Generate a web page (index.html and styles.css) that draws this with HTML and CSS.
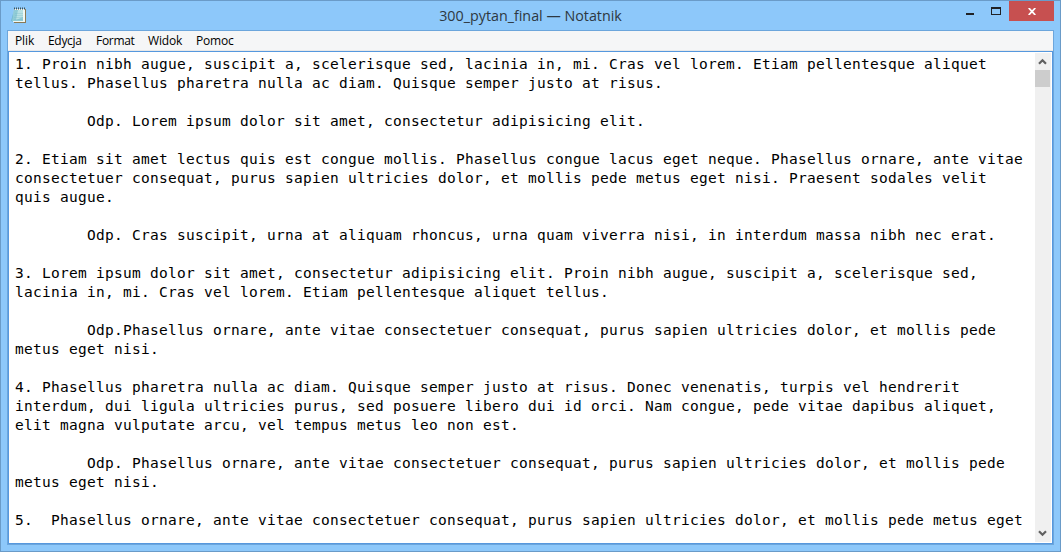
FILE: index.html
```html
<!DOCTYPE html>
<html lang="pl">
<head>
<meta charset="utf-8">
<title>300_pytan_final — Notatnik</title>
<link rel="stylesheet" href="styles.css">
</head>
<body>
<div class="window">
  <header class="titlebar">
    <svg class="app-icon" width="17" height="18" viewBox="0 0 17 18">
      <path d="M3 3L0 14l3 1z" fill="#70b6ce"/>
      <path d="M3 2h12v14H3z" fill="#8a7a55"/>
      <path d="M3 2h11v13H2z" fill="#f0f8f5"/>
      <path d="M3 3h9v11H1z" fill="#8fcbd6"/>
      <path d="M7 3h5v7L5 13z" fill="#b8e1e4"/>
      <path d="M4 6.5h8M4 8.5h8M3 10.5h9M3 12.5h9" stroke="#75b9c6" stroke-width=".3"/>
      <path d="M3 1.5h11" stroke="#3f5357" stroke-width="2" stroke-dasharray="1 1"/>
    </svg>
    <h1 class="title">300_pytan_final — Notatnik</h1>
    <div class="controls">
      <button class="control minimize" aria-label="Minimalizuj"><svg width="8" height="2"><path d="M0 0h8v2H0z" fill="#202225"/></svg></button>
      <button class="control maximize" aria-label="Maksymalizuj"><svg width="10" height="8"><path d="M0 0h10v8H0zM1 2v5h8V2z" fill="#202225" fill-rule="evenodd"/></svg></button>
      <button class="control close" aria-label="Zamknij"><svg width="8" height="7" viewBox="0 0 8 7"><path d="M.7 0L7.3 7M7.3 0L.7 7" stroke="#fff" stroke-width="1.8"/></svg></button>
    </div>
  </header>
  <main class="client">
    <nav class="menu"><span class="item plik">Plik</span><span class="item edycja">Edycja</span><span class="item format">Format</span><span class="item widok">Widok</span><span class="item pomoc">Pomoc</span></nav>
    <section class="editor">
<pre class="text">1. Proin nibh augue, suscipit a, scelerisque sed, lacinia in, mi. Cras vel lorem. Etiam pellentesque aliquet
tellus. Phasellus pharetra nulla ac diam. Quisque semper justo at risus.

	Odp. Lorem ipsum dolor sit amet, consectetur adipisicing elit.

2. Etiam sit amet lectus quis est congue mollis. Phasellus congue lacus eget neque. Phasellus ornare, ante vitae
consectetuer consequat, purus sapien ultricies dolor, et mollis pede metus eget nisi. Praesent sodales velit
quis augue.

	Odp. Cras suscipit, urna at aliquam rhoncus, urna quam viverra nisi, in interdum massa nibh nec erat.

3. Lorem ipsum dolor sit amet, consectetur adipisicing elit. Proin nibh augue, suscipit a, scelerisque sed,
lacinia in, mi. Cras vel lorem. Etiam pellentesque aliquet tellus.

	Odp.Phasellus ornare, ante vitae consectetuer consequat, purus sapien ultricies dolor, et mollis pede
metus eget nisi.

4. Phasellus pharetra nulla ac diam. Quisque semper justo at risus. Donec venenatis, turpis vel hendrerit
interdum, dui ligula ultricies purus, sed posuere libero dui id orci. Nam congue, pede vitae dapibus aliquet,
elit magna vulputate arcu, vel tempus metus leo non est.

	Odp. Phasellus ornare, ante vitae consectetuer consequat, purus sapien ultricies dolor, et mollis pede
metus eget nisi.

5.  Phasellus ornare, ante vitae consectetuer consequat, purus sapien ultricies dolor, et mollis pede metus eget</pre>
      <div class="scrollbar">
        <div class="arrow"><svg width="9" height="7"><path d="M1 5.7L4.5 2.2L8 5.7" fill="none" stroke="#606060" stroke-width="2.2"/></svg></div>
        <div class="thumb"></div>
        <div class="arrow down"><svg width="9" height="7"><path d="M1 1.3L4.5 4.8L8 1.3" fill="none" stroke="#606060" stroke-width="2.2"/></svg></div>
      </div>
    </section>
  </main>
</div>
</body>
</html>
```

FILE: styles.css
```css
* { box-sizing: border-box; }
body { margin: 0; overflow: hidden; }
.window {
  width: 1061px;
  height: 552px;
  display: flex;
  flex-direction: column;
  padding: 0 6px 6px;
  background: #8dc8fa;
  border: 1px solid #6a9bc8;
}
.titlebar {
  height: 29px;
  flex: none;
  display: grid;
  grid-template-columns: 120px 1fr 120px;
  align-items: start;
}
.app-icon { margin: 6px 0 0 4px; }
.title {
  margin: 3px 0 0;
  text-align: center;
  font: 400 14.3px/23px "Open Sans", "Noto Sans", sans-serif;
  color: #2d3842;
  white-space: nowrap;
}
.controls { display: flex; justify-content: flex-end; }
.control {
  height: 20px;
  padding: 0;
  border: 0;
  background: none;
  display: flex;
  align-items: center;
  justify-content: center;
}
.minimize { width: 26px; padding-top: 6px; }
.maximize { width: 26px; }
.close { width: 45px; padding-top: 1px; background: #c75050; }
.client {
  flex: 1;
  min-height: 0;
  display: flex;
  flex-direction: column;
  border: 1px solid #6ca6dc;
}
.menu {
  height: 20px;
  flex: none;
  display: flex;
  padding-left: 7px;
  background: #f5f6f7;
  border-bottom: 1px solid #e8e8e8;
  font: 12px/20px "Open Sans", "Noto Sans", sans-serif;
  color: #000;
}
.item { white-space: nowrap; }
.plik { width: 33px; letter-spacing: -.1px; }
.edycja { width: 48px; letter-spacing: -.3px; }
.format { width: 52px; letter-spacing: -.3px; }
.widok { width: 48px; letter-spacing: -.15px; }
.pomoc { letter-spacing: -.2px; }
.editor {
  flex: 1;
  min-height: 0;
  display: flex;
  justify-content: space-between;
  background: #fff;
  border: 1px solid #5698de;
  padding: 1px 1px 1px 6px;
}
.text {
  margin: 2px 0 0;
  font: 14.5px/19px "DejaVu Sans Mono", monospace;
  letter-spacing: .27px;
  tab-size: 72px;
  color: #000;
}
.scrollbar {
  width: 16px;
  flex: none;
  display: flex;
  flex-direction: column;
  background: #f0f0f0;
  padding-right: 1px;
}
.arrow { height: 17px; display: flex; align-items: center; justify-content: center; }
.thumb { height: 17px; background: #cdcdcd; }
.down { margin-top: auto; }
```
